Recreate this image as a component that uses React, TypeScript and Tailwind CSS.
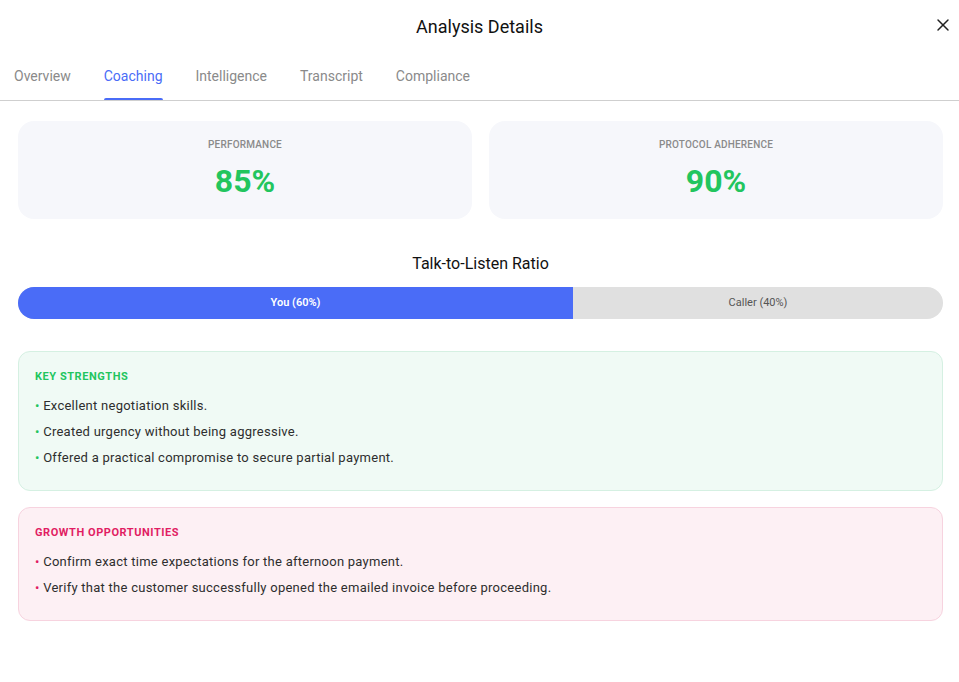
import { X } from 'lucide-react';

const TABS = ['Overview', 'Coaching', 'Intelligence', 'Transcript', 'Compliance'];

const STRENGTHS = [
  'Excellent negotiation skills.',
  'Created urgency without being aggressive.',
  'Offered a practical compromise to secure partial payment.',
];

const GROWTH = [
  'Confirm exact time expectations for the afternoon payment.',
  'Verify that the customer successfully opened the emailed invoice before proceeding.',
];

function StatCard({ label, value }: { label: string; value: string }) {
  return (
    <div className="flex-1 h-[98px] rounded-2xl bg-[#f6f7fb] flex flex-col items-center pt-[17px]">
      <p className="text-[10px] leading-[14px] font-medium tracking-[0.02em] uppercase text-[#8a8a8a]">{label}</p>
      <p className="mt-[11px] text-[32px] leading-[36px] font-bold text-[#22c55e]">{value}</p>
    </div>
  );
}

function ListBox({
  title,
  items,
  tone,
}: {
  title: string;
  items: string[];
  tone: 'green' | 'pink';
}) {
  const green = tone === 'green';
  return (
    <div
      className={
        green
          ? 'rounded-xl border border-[#d5f0e2] bg-[#f0faf5] px-4 pt-[17px] pb-[19px]'
          : 'rounded-xl border border-[#f7d3df] bg-[#fdf0f4] px-4 pt-[17px] pb-[19px]'
      }
    >
      <h3
        className={
          green
            ? 'text-[11px] leading-[16px] font-bold tracking-[0.05em] uppercase text-[#22c55e]'
            : 'text-[11px] leading-[16px] font-bold tracking-[0.05em] uppercase text-[#e11d63]'
        }
      >
        {title}
      </h3>
      <ul className="mt-[8px] flex flex-col">
        {items.map((item) => (
          <li key={item} className="text-[13px] leading-[26px] tracking-[0.02em] text-[#2e2e2e]">
            <span className={green ? 'text-[#22c55e]' : 'text-[#e11d63]'}>•</span> {item}
          </li>
        ))}
      </ul>
    </div>
  );
}

export default function App() {
  return (
    <div className="w-[959px] h-[682px] bg-white font-['Roboto',sans-serif] text-[#1a1a1a]">
      <header className="relative h-[52px] flex items-center justify-center">
        <h1 className="text-[18px] font-normal text-[#111]">Analysis Details</h1>
        <button className="absolute right-[4px] top-[13px] w-6 h-6 flex items-center justify-center text-[#222]">
          <X size={20} strokeWidth={1.75} />
        </button>
      </header>

      <nav className="flex items-end h-[49px] border-b border-[#cfcfcf] px-[14px] gap-[33px]">
        {TABS.map((tab) => (
          <button
            key={tab}
            className={
              tab === 'Coaching'
                ? 'relative h-full flex items-center pt-[1px] text-[14px] text-[#4a6cf7]'
                : 'relative h-full flex items-center pt-[1px] text-[14px] text-[#8a8a8a]'
            }
          >
            {tab}
            {tab === 'Coaching' && (
              <span className="absolute left-0 right-0 bottom-0 h-[2px] rounded-t bg-[#4a6cf7]" />
            )}
          </button>
        ))}
      </nav>

      <main className="pl-[18px] pr-[16px] pt-5">
        <section className="flex gap-[17px]">
          <StatCard label="Performance" value="85%" />
          <StatCard label="Protocol Adherence" value="90%" />
        </section>

        <section className="mt-[34px]">
          <h2 className="text-center text-[16px] leading-[22px] font-normal text-[#111]">Talk-to-Listen Ratio</h2>
          <div className="mt-[12px] h-8 rounded-full bg-[#e0e0e0] flex overflow-hidden">
            <div className="w-[60%] bg-[#4a6cf7] flex items-center justify-center text-[11px] font-semibold text-white">
              You (60%)
            </div>
            <div className="flex-1 flex items-center justify-center text-[11px] text-[#555]">Caller (40%)</div>
          </div>
        </section>

        <section className="mt-8 flex flex-col gap-4">
          <ListBox title="Key Strengths" items={STRENGTHS} tone="green" />
          <ListBox title="Growth Opportunities" items={GROWTH} tone="pink" />
        </section>
      </main>
    </div>
  );
}
